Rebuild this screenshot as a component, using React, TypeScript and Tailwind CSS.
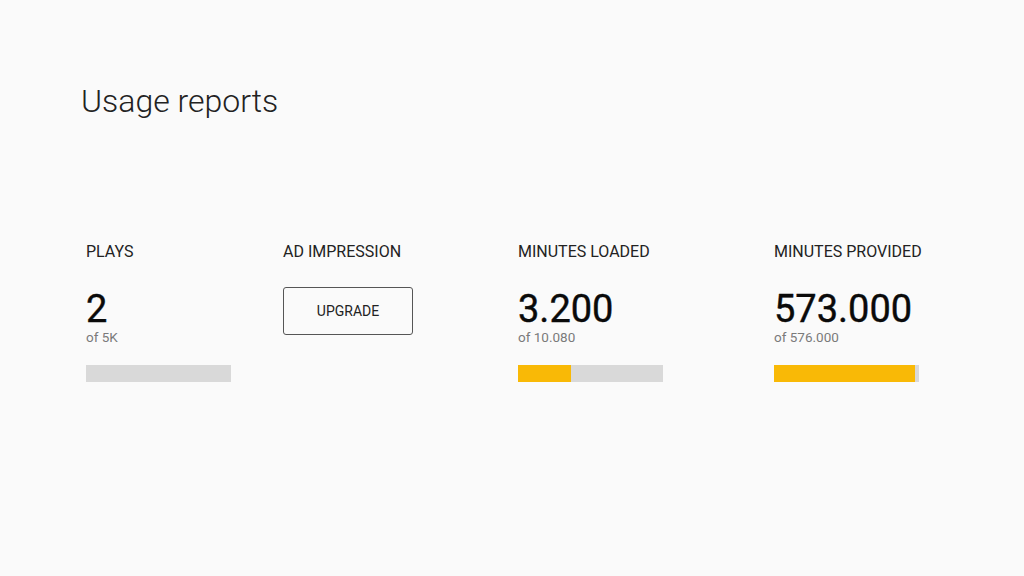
import React from "react";

interface IStatProps {
  label: string;
  value: string;
  total: string;
  filled: number;
  width: string;
}

const Stat = ({ label, value, total, filled, width }: IStatProps) => {
  return (
    <div className={width}>
      <p className="text-[16px] leading-[20px] text-[#222]">{label}</p>
      <p className="mt-[27px] text-[38px] leading-[40px] font-normal text-[#0a0a0a] [-webkit-text-stroke:0.4px_#0a0a0a]">
        {value}
      </p>
      <p className="mt-0 text-[13.5px] leading-[16px] text-[#7a7a7a]">{total}</p>
      <div className="mt-[20px] h-[17px] w-[145px] bg-[#d9d9d9]">
        <div className="h-full bg-[#f9b906]" style={{ width: `${filled}px` }} />
      </div>
    </div>
  );
};

export default function App() {
  return (
    <div className="min-h-[576px] w-full bg-[#fafafa] font-['Roboto',sans-serif]">
      <div className="px-[81px] pt-[79px]">
        <h1 className="text-[32px] leading-[44px] font-light text-[#222]">
          Usage reports
        </h1>
      </div>
      <div className="flex pt-[119px] pl-[86px]">
        <Stat label="PLAYS" value="2" total="of 5K" filled={0} width="w-[197px]" />
        <div className="w-[235px]">
          <p className="text-[16px] leading-[20px] text-[#222]">AD IMPRESSION</p>
          <button className="mt-[25px] flex h-[48px] w-[130px] items-center justify-center rounded-[3px] border border-[#555] text-[14px] text-[#222]">
            UPGRADE
          </button>
        </div>
        <Stat
          label="MINUTES LOADED"
          value="3.200"
          total="of 10.080"
          filled={53}
          width="w-[256px]"
        />
        <Stat
          label="MINUTES PROVIDED"
          value="573.000"
          total="of 576.000"
          filled={141}
          width="w-[200px]"
        />
      </div>
    </div>
  );
}
